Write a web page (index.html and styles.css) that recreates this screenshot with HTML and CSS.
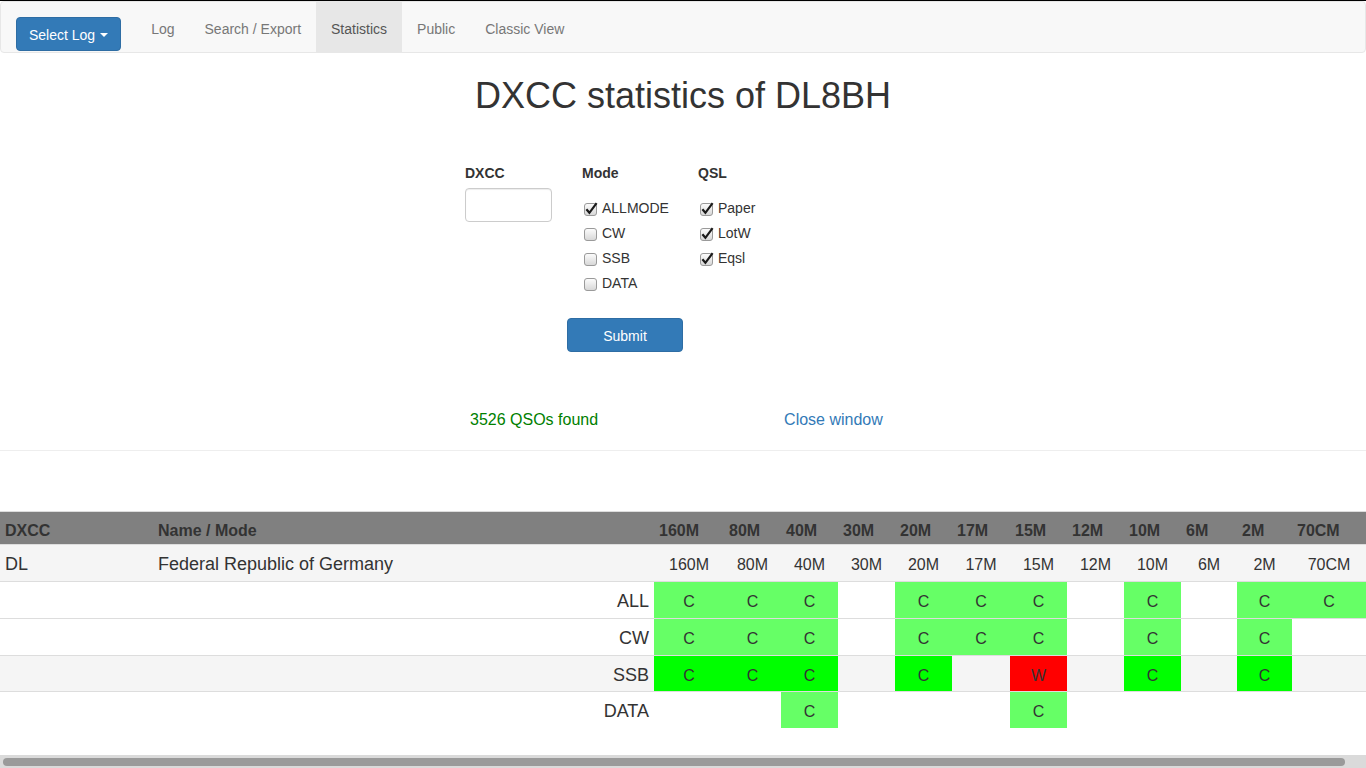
FILE: index.html
```html
<!DOCTYPE html>
<html lang="en">
<head>
<meta charset="utf-8">
<title>DXCC statistics of DL8BH</title>
<link rel="stylesheet" href="styles.css">
</head>
<body>
<div class="page">
<nav class="navbar">
  <button class="btn btn-primary btn-select">Select Log <span class="caret"></span></button>
  <ul class="nav">
    <li><a href="#">Log</a></li>
    <li><a href="#">Search / Export</a></li>
    <li class="active"><a href="#">Statistics</a></li>
    <li><a href="#">Public</a></li>
    <li><a href="#">Classic View</a></li>
  </ul>
</nav>

<h1 class="title">DXCC statistics of DL8BH</h1>

<form class="stats-form">
  <div class="col">
    <div class="col-label">DXCC</div>
    <input class="text-input" type="text">
  </div>
  <div class="col">
    <div class="col-label">Mode</div>
    <ul class="checks">
      <li><svg class="cb" viewBox="0 0 13 13"><defs><linearGradient id="g1" x1="0" y1="0" x2="0" y2="1"><stop offset="0" stop-color="#fdfdfd"/><stop offset="1" stop-color="#d6d6d6"/></linearGradient></defs><rect x="0.5" y="0.5" width="12" height="12" rx="2.5" fill="url(#g1)" stroke="#9a9a9a"/><path d="M2.4 6.2 L5.4 9.8 L12.6 0.2" fill="none" stroke="#1a1a1a" stroke-width="2.2"/></svg>ALLMODE</li>
      <li><svg class="cb" viewBox="0 0 13 13"><rect x="0.5" y="0.5" width="12" height="12" rx="2.5" fill="url(#g1)" stroke="#9a9a9a"/></svg>CW</li>
      <li><svg class="cb" viewBox="0 0 13 13"><rect x="0.5" y="0.5" width="12" height="12" rx="2.5" fill="url(#g1)" stroke="#9a9a9a"/></svg>SSB</li>
      <li><svg class="cb" viewBox="0 0 13 13"><rect x="0.5" y="0.5" width="12" height="12" rx="2.5" fill="url(#g1)" stroke="#9a9a9a"/></svg>DATA</li>
    </ul>
  </div>
  <div class="col">
    <div class="col-label">QSL</div>
    <ul class="checks">
      <li><svg class="cb" viewBox="0 0 13 13"><rect x="0.5" y="0.5" width="12" height="12" rx="2.5" fill="url(#g1)" stroke="#9a9a9a"/><path d="M2.4 6.2 L5.4 9.8 L12.6 0.2" fill="none" stroke="#1a1a1a" stroke-width="2.2"/></svg>Paper</li>
      <li><svg class="cb" viewBox="0 0 13 13"><rect x="0.5" y="0.5" width="12" height="12" rx="2.5" fill="url(#g1)" stroke="#9a9a9a"/><path d="M2.4 6.2 L5.4 9.8 L12.6 0.2" fill="none" stroke="#1a1a1a" stroke-width="2.2"/></svg>LotW</li>
      <li><svg class="cb" viewBox="0 0 13 13"><rect x="0.5" y="0.5" width="12" height="12" rx="2.5" fill="url(#g1)" stroke="#9a9a9a"/><path d="M2.4 6.2 L5.4 9.8 L12.6 0.2" fill="none" stroke="#1a1a1a" stroke-width="2.2"/></svg>Eqsl</li>
    </ul>
  </div>
  <div class="submit-row">
    <button type="button" class="btn btn-primary btn-submit">Submit</button>
  </div>
</form>

<div class="result">
  <span class="found">3526 QSOs found</span>
  <a class="close" href="#">Close window</a>
</div>

<hr class="sep">

<table class="stats">
  <colgroup>
    <col class="c-dxcc"><col class="c-name">
    <col class="c-160"><col class="c-b"><col class="c-b"><col class="c-b"><col class="c-b"><col class="c-b58"><col class="c-b"><col class="c-b"><col class="c-b"><col class="c-b56"><col class="c-b55"><col class="c-70">
  </colgroup>
  <thead>
    <tr>
      <th>DXCC</th><th>Name / Mode</th>
      <th>160M</th><th>80M</th><th>40M</th><th>30M</th><th>20M</th><th>17M</th><th>15M</th><th>12M</th><th>10M</th><th>6M</th><th>2M</th><th>70CM</th>
    </tr>
  </thead>
  <tbody>
    <tr class="row-grey">
      <td>DL</td><td>Federal Republic of Germany</td>
      <td class="band">160M</td><td class="band">80M</td><td class="band">40M</td><td class="band">30M</td><td class="band">20M</td><td class="band">17M</td><td class="band">15M</td><td class="band">12M</td><td class="band">10M</td><td class="band">6M</td><td class="band">2M</td><td class="band">70CM</td>
    </tr>
    <tr>
      <td></td><td class="mode">ALL</td>
      <td class="q lc">C</td><td class="q lc">C</td><td class="q lc">C</td><td></td><td class="q lc">C</td><td class="q lc">C</td><td class="q lc">C</td><td></td><td class="q lc">C</td><td></td><td class="q lc">C</td><td class="q lc">C</td>
    </tr>
    <tr>
      <td></td><td class="mode">CW</td>
      <td class="q lc">C</td><td class="q lc">C</td><td class="q lc">C</td><td></td><td class="q lc">C</td><td class="q lc">C</td><td class="q lc">C</td><td></td><td class="q lc">C</td><td></td><td class="q lc">C</td><td></td>
    </tr>
    <tr class="row-grey">
      <td></td><td class="mode">SSB</td>
      <td class="q gc">C</td><td class="q gc">C</td><td class="q gc">C</td><td></td><td class="q gc">C</td><td></td><td class="q rw">W</td><td></td><td class="q gc">C</td><td></td><td class="q gc">C</td><td></td>
    </tr>
    <tr>
      <td></td><td class="mode">DATA</td>
      <td></td><td></td><td class="q lc">C</td><td></td><td></td><td></td><td class="q lc">C</td><td></td><td></td><td></td><td></td><td></td>
    </tr>
  </tbody>
</table>
</div>
<div class="hscroll"><div class="hscroll-thumb"></div></div>
</body>
</html>
```

FILE: styles.css
```css
html {
  overflow: hidden;
}
body {
  margin: 0;
  height: 100vh;
  box-sizing: border-box;
  display: flex;
  flex-direction: column;
  border-top: 1px solid #000;
  font-family: "Liberation Sans", Arial, Helvetica, sans-serif;
  font-size: 14px;
  line-height: 1.42857;
  color: #333;
  background: #fff;
}
.page {
  flex: 1;
  overflow: hidden;
}
.hscroll {
  flex: none;
  height: 13px;
  background: #dadada;
  display: flex;
  padding: 3px 21px 2px 3px;
  box-sizing: border-box;
}
.hscroll-thumb {
  flex: 1;
  background: #9a9a9a;
  border-radius: 4px;
}
.navbar {
  display: flex;
  align-items: flex-start;
  height: 50px;
  padding: 0 15px;
  background: #f8f8f8;
  border: 1px solid #e7e7e7;
  border-radius: 4px;
}
.btn {
  font-family: inherit;
  font-size: 14px;
  line-height: 20px;
  padding: 6px 12px;
  border: 1px solid transparent;
  border-radius: 4px;
  cursor: pointer;
}
.btn-primary {
  color: #fff;
  background: #337ab7;
  border-color: #2e6da4;
}
.btn-select {
  margin-top: 15px;
  padding: 7px 12px 5px;
  display: flex;
  align-items: center;
}
.caret {
  display: inline-block;
  width: 0;
  height: 0;
  margin-left: 5px;
  border-top: 4px solid #fff;
  border-left: 4px solid transparent;
  border-right: 4px solid transparent;
}
.nav {
  display: flex;
  list-style: none;
  margin: 0 0 0 15px;
  padding: 0;
}
.nav a {
  display: block;
  padding: 17px 15px 13px;
  line-height: 20px;
  color: #777;
  text-decoration: none;
}
.nav .active a {
  color: #555;
  background: #e7e7e7;
}
.title {
  margin: 23px 0 0;
  font-size: 36px;
  font-weight: 500;
  line-height: 1.1;
  text-align: center;
  color: #333;
}
.stats-form {
  width: 436px;
  margin: 47px auto 0;
  display: grid;
  grid-template-columns: 117px 116px 1fr;
}
.col-label {
  font-weight: bold;
  line-height: 20px;
}
.text-input {
  display: block;
  box-sizing: border-box;
  width: 87px;
  height: 34px;
  margin-top: 5px;
  border: 1px solid #ccc;
  border-radius: 4px;
  box-shadow: inset 0 1px 1px rgba(0,0,0,0.075);
}
.checks {
  list-style: none;
  margin: 14px 0 0;
  padding: 0;
}
.checks li {
  display: flex;
  align-items: center;
  height: 25px;
}
.cb {
  width: 13px;
  height: 13px;
  margin: 0 5px 0 2px;
  flex: none;
  overflow: visible;
}
.submit-row {
  grid-column: 1 / -1;
  margin-top: 21px;
}
.btn-submit {
  margin-left: 102px;
  width: 116px;
  height: 34px;
  padding-top: 7px;
  padding-bottom: 5px;
}
.result {
  width: 436px;
  margin: 57px auto 0;
  display: flex;
  font-size: 16px;
  line-height: 22px;
  gap: 186px;
  padding-left: 5px;
  box-sizing: border-box;
}
.found {
  color: #008000;
}
.close {
  color: #337ab7;
  text-decoration: none;
}
.sep {
  margin: 19px 0 0;
  border: 0;
  border-top: 1px solid #eee;
}
.stats {
  margin-top: 60px;
  border-collapse: collapse;
  table-layout: fixed;
  width: 1366px;
}
.c-dxcc { width: 153px; }
.c-name { width: 501px; }
.c-160 { width: 70px; }
.c-b { width: 57px; }
.c-b58 { width: 58px; }
.c-b56 { width: 56px; }
.c-b55 { width: 55px; }
.c-70 { width: 74px; }
.stats th,
.stats td {
  padding: 7px 5px 3px;
  border-top: 1px solid #ddd;
  white-space: nowrap;
}
.stats th {
  padding: 8px 5px 2px;
  background: #808080;
  color: #333;
  font-size: 16px;
  font-weight: bold;
  line-height: 22.86px;
  text-align: left;
}
.stats td {
  font-size: 18px;
  line-height: 25.71px;
}
.row-grey td {
  background: #f5f5f5;
}
.stats td.band {
  font-size: 16px;
  text-align: center;
}
.stats td.mode {
  text-align: right;
}
.stats td.q {
  font-size: 16px;
  text-align: center;
  color: #333;
}
.stats td.lc { background: #66ff66; }
.stats td.gc { background: #00ff00; }
.stats td.rw { background: #ff0000; }
```
